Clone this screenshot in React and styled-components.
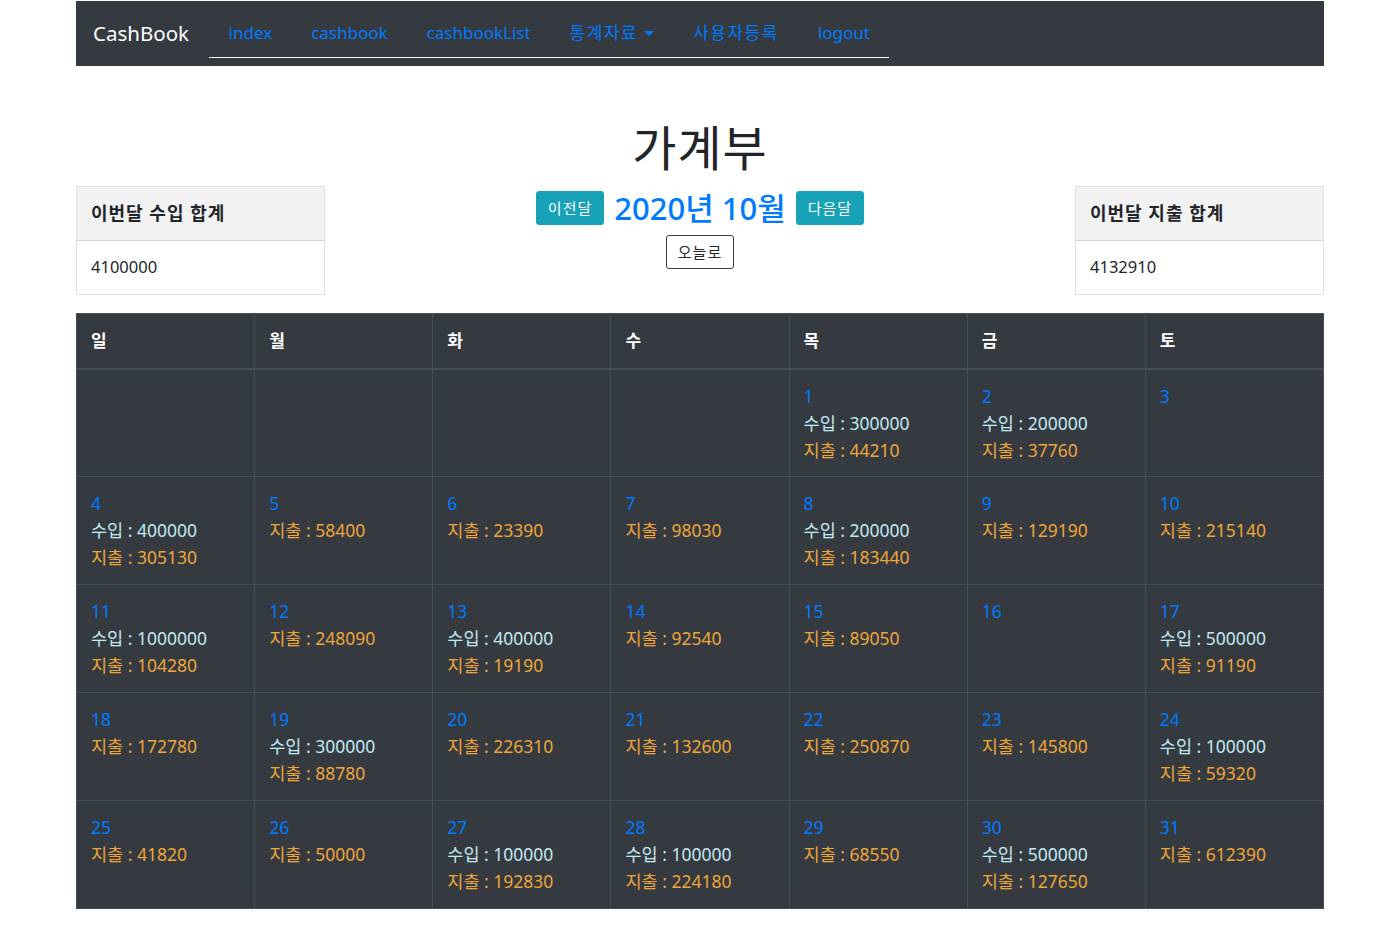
import React from 'react';
import styled, { createGlobalStyle } from 'styled-components';

const GlobalStyle = createGlobalStyle`
  body {
    margin: 0;
    background: #ffffff;
    font-family: "Noto Sans", "Noto Sans CJK KR", sans-serif;
    color: #212529;
  }
`;

// layout
const Container = styled.div`
  width: 1248px;
  margin: 0 auto;
`;

const Navbar = styled.nav`
  height: 65px;
  margin-top: 1px;
  background: #343a40;
  display: flex;
  align-items: center;
  padding: 0 17px;
`;

const Brand = styled.a`
  color: #ffffff;
  font-size: 20.5px;
  line-height: 30px;
  margin-right: 20px;
  margin-top: -2px;
`;

const NavList = styled.ul`
  list-style: none;
  margin: 0;
  padding: 0;
  display: flex;
  align-self: flex-start;
  margin-top: 10px;
  border-bottom: 1px solid #ffffff;
`;

const NavLink = styled.a`
  display: flex;
  align-items: center;
  padding: 9px 19.5px 12px;
  color: #007bff;
  font-size: 17px;
  line-height: 25px;
  letter-spacing: ${p => (p.$ko ? '1.5px' : '0')};
  cursor: pointer;
`;

const Caret = styled.span`
  display: inline-block;
  margin-left: 6px;
  margin-top: 2px;
  border-top: 5px solid #007bff;
  border-left: 5px solid transparent;
  border-right: 5px solid transparent;
`;

const TopRow = styled.div`
  display: flex;
  align-items: flex-start;
  padding-top: 54px;
`;

const Card = styled.div`
  width: 249px;
  margin-top: 66px;
  border: 1px solid rgba(0, 0, 0, 0.125);
  box-sizing: border-box;
`;

const CardHeader = styled.div`
  height: 54px;
  display: flex;
  align-items: center;
  padding: 0 14px 4px;
  box-sizing: border-box;
  background: #f2f2f2;
  border-bottom: 1px solid rgba(0, 0, 0, 0.125);
  font-weight: 700;
  font-size: 18px;
  letter-spacing: 1px;
`;

const CardBody = styled.div`
  height: 53px;
  display: flex;
  align-items: center;
  padding: 0 14px 3px;
  box-sizing: border-box;
  font-size: 16.5px;
`;

const Center = styled.div`
  flex: 1;
  display: flex;
  flex-direction: column;
  align-items: center;
`;

const Title = styled.h1`
  margin: 0;
  font-size: 48px;
  font-weight: 400;
  line-height: 56px;
  letter-spacing: 1px;
  color: #212529;
`;

const MonthRow = styled.div`
  display: flex;
  align-items: center;
  gap: 10px;
  margin-top: 10px;
`;

const MonthTitle = styled.h2`
  margin: 0;
  font-size: 31px;
  font-weight: 500;
  line-height: 44px;
  color: #007bff;
`;

const Button = styled.button`
  font-family: inherit;
  font-size: 15px;
  line-height: 22px;
  padding: 5px 11px;
  letter-spacing: 1px;
  border-radius: 3px;
  cursor: pointer;
  color: ${p => (p.$outline ? '#212529' : '#ffffff')};
  background: ${p => (p.$outline ? '#ffffff' : '#17a2b8')};
  border: 1px solid ${p => (p.$outline ? '#343a40' : '#17a2b8')};
`;

const TodayWrap = styled.div`
  margin-top: 5px;
`;

const Table = styled.table`
  width: 1248px;
  margin-top: 18px;
  border-collapse: collapse;
  table-layout: fixed;
  background: #343a40;
  color: #ffffff;
`;

const Th = styled.th`
  height: 55px;
  padding: 0 14px 2px;
  box-sizing: border-box;
  text-align: left;
  font-size: 17px;
  font-weight: 700;
  border: 1px solid #454d55;
  border-bottom: 2px solid #454d55;
`;

const Td = styled.td`
  height: 108px;
  padding: 13px 14px 12px;
  box-sizing: border-box;
  vertical-align: top;
  border: 1px solid #454d55;
  font-size: 17.5px;
  line-height: 27px;
`;

const Day = styled.div`
  color: #007bff;
`;

const Amount = styled.div`
  color: ${p => (p.$kind === 'in' ? '#c2e8f2' : '#f0a538')};
`;

const days = ['일', '월', '화', '수', '목', '금', '토'];

const data = {
  1: [300000, 44210], 2: [200000, 37760], 3: [],
  4: [400000, 305130], 5: [null, 58400], 6: [null, 23390], 7: [null, 98030],
  8: [200000, 183440], 9: [null, 129190], 10: [null, 215140],
  11: [1000000, 104280], 12: [null, 248090], 13: [400000, 19190], 14: [null, 92540],
  15: [null, 89050], 16: [], 17: [500000, 91190],
  18: [null, 172780], 19: [300000, 88780], 20: [null, 226310], 21: [null, 132600],
  22: [null, 250870], 23: [null, 145800], 24: [100000, 59320],
  25: [null, 41820], 26: [null, 50000], 27: [100000, 192830], 28: [100000, 224180],
  29: [null, 68550], 30: [500000, 127650], 31: [null, 612390],
};

// October 2020 starts on Thursday
const buildWeeks = () => {
  const cells = [null, null, null, null];
  for (let d = 1; d <= 31; d++) cells.push(d);
  const weeks = [];
  for (let i = 0; i < cells.length; i += 7) weeks.push(cells.slice(i, i + 7));
  return weeks;
};

const DayCell = ({ day }) => {
  if (!day) return <Td />;
  const [income, expense] = data[day];
  return (
    <Td>
      <Day>{day}</Day>
      {income != null && <Amount $kind="in">수입 : {income}</Amount>}
      {expense != null && <Amount $kind="out">지출 : {expense}</Amount>}
    </Td>
  );
};

const App = () => {
  const weeks = buildWeeks();
  return (
    <>
      <GlobalStyle />
      <Container>
        <Navbar>
          <Brand>CashBook</Brand>
          <NavList>
            <li><NavLink>index</NavLink></li>
            <li><NavLink>cashbook</NavLink></li>
            <li><NavLink>cashbookList</NavLink></li>
            <li><NavLink $ko>통계자료<Caret /></NavLink></li>
            <li><NavLink $ko>사용자등록</NavLink></li>
            <li><NavLink>logout</NavLink></li>
          </NavList>
        </Navbar>

        <TopRow>
          <Card>
            <CardHeader>이번달 수입 합계</CardHeader>
            <CardBody>4100000</CardBody>
          </Card>
          <Center>
            <Title>가계부</Title>
            <MonthRow>
              <Button>이전달</Button>
              <MonthTitle>2020년 10월</MonthTitle>
              <Button>다음달</Button>
            </MonthRow>
            <TodayWrap>
              <Button $outline>오늘로</Button>
            </TodayWrap>
          </Center>
          <Card>
            <CardHeader>이번달 지출 합계</CardHeader>
            <CardBody>4132910</CardBody>
          </Card>
        </TopRow>

        <Table>
          <thead>
            <tr>
              {days.map(d => <Th key={d}>{d}</Th>)}
            </tr>
          </thead>
          <tbody>
            {weeks.map((week, i) => (
              <tr key={i}>
                {week.map((day, j) => <DayCell key={j} day={day} />)}
              </tr>
            ))}
          </tbody>
        </Table>
      </Container>
    </>
  );
};

export default App;
